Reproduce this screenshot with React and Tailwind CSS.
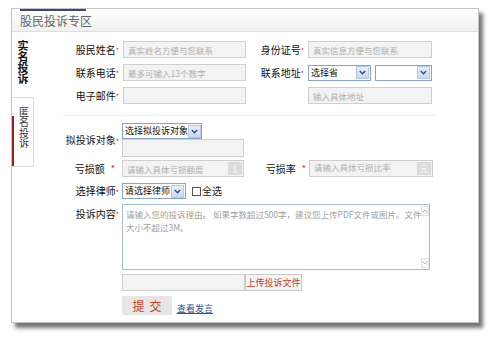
import React from 'react'

const Star = ({ mid }) => (
  <span className={`text-[#d22] ${mid ? 'text-[9px] ml-[6px]' : 'text-[7px] self-start mt-[1px]'}`}>*</span>
)

function Label({ text, w = 'w-[87px]', mid, pr = 'pr-[2px]' }) {
  return (
    <div className={`${w} ${pr} shrink-0 flex justify-end items-center text-[10px] text-[#111] leading-[12px] whitespace-nowrap`}>
      <span className="flex items-center">
        {text}
        <Star mid={mid} />
      </span>
    </div>
  )
}

function Field({ w, ph, suffix, top }) {
  return (
    <div
      className={`${w} h-[17px] shrink-0 bg-[#f3f3f3] border border-[#cfcfcf] flex ${top ? 'items-start' : 'items-center'} pl-[4px] text-[8.5px] text-[#b0b0b0] leading-[12px]`}
    >
      <span className="flex-1 whitespace-nowrap">{ph}</span>
      {suffix && (
        <span className="w-[14px] h-[13px] mr-[1px] self-center bg-[#dcdcdc] text-white text-[8px] leading-[10px] flex items-center justify-center">
          {suffix}
        </span>
      )}
    </div>
  )
}

function Arrow() {
  return (
    <span className="w-[13px] h-[13px] shrink-0 mr-[1px] bg-gradient-to-b from-[#e8eefa] to-[#c9d8f0] border border-[#b6c7e6] flex items-center justify-center">
      <svg width="7" height="5" viewBox="0 0 7 5">
        <path d="M0.8 1 L3.5 3.8 L6.2 1" fill="none" stroke="#2a4f9a" strokeWidth="1.4" />
      </svg>
    </span>
  )
}

function Select({ w, text }) {
  return (
    <div className={`${w} h-[16px] shrink-0 bg-white border border-[#8aa3c2] flex items-center pl-[2px] text-[9px] text-[#111] leading-[12px]`}>
      <span className="flex-1 whitespace-nowrap">{text}</span>
      <Arrow />
    </div>
  )
}

export default function App() {
  return (
    <div className="min-h-screen bg-white pt-[8px] pl-[11px] font-['Noto_Sans_CJK_SC','Liberation_Sans',sans-serif]">
      <div className="w-[468px] h-[315px] bg-white border border-[#c4c4c4] shadow-[4px_5px_4px_rgba(0,0,0,0.55)] flex flex-col">
        {/* header */}
        <div className="h-[23px] shrink-0 border-b border-[#e0e0e0] bg-gradient-to-b from-white to-[#f1f1f1] pl-[8px]">
          <div className="w-[66px] h-full border-t-2 border-[#3b4a6b] flex items-center text-[12px] text-[#666] leading-[14px] whitespace-nowrap">
            股民投诉专区
          </div>
        </div>

        <div className="flex flex-1">
          {/* side tabs */}
          <div className="w-[22px] shrink-0 flex flex-col">
            <div className="pt-[8px] h-[57px] flex justify-center">
              <span className="[writing-mode:vertical-rl] text-[11px] font-bold text-[#111] leading-[12px]">实名投诉</span>
            </div>
            <div className="mt-[8px] h-[70px] border border-l-0 border-[#dcdcdc] flex">
              <div className="w-[2px] h-[50px] self-end bg-[#9b1c1c]" />
              <div className="flex-1 pt-[9px] flex justify-center">
                <span className="[writing-mode:vertical-rl] text-[10px] text-[#333] leading-[12px] tracking-[0.5px]">匿名投诉</span>
              </div>
            </div>
          </div>

          {/* form */}
          <div className="flex-1 pt-[9px]">
            <div className="flex flex-col gap-[6px]">
              <div className="flex items-center">
                <Label text="股民姓名" />
                <div className="ml-[2px]"><Field w="w-[123px]" ph="真实姓名方便与您联系" /></div>
                <Label text="身份证号" w="w-[60px]" />
                <div className="ml-[2px]"><Field w="w-[124px]" ph="真实信息方便与您联系" /></div>
              </div>
              <div className="flex items-center">
                <Label text="联系电话" />
                <div className="ml-[2px]"><Field w="w-[123px]" ph="最多可输入13个数字" /></div>
                <Label text="联系地址" w="w-[60px]" />
                <div className="ml-[2px] flex gap-[4px]">
                  <Select w="w-[63px]" text="选择省" />
                  <Select w="w-[57px]" text="" />
                </div>
              </div>
              <div className="flex items-center">
                <Label text="电子邮件" />
                <div className="ml-[2px]"><Field w="w-[123px]" ph="" /></div>
                <div className="w-[60px]" />
                <div className="ml-[2px]"><Field w="w-[124px]" ph="输入具体地址" /></div>
              </div>
            </div>

            <div className="ml-[29px] mt-[11px] w-[373px] border-t border-[#ebebeb]" />

            <div className="mt-[7px] flex items-center">
              <Label text="拟投诉对象" />
              <div className="ml-[1px] flex flex-col">
                <Select w="w-[80px]" text="选择拟投诉对象" />
                <div className="w-[122px] h-[18px] bg-[#f3f3f3] border border-[#cfcfcf]" />
              </div>
            </div>

            <div className="mt-[3px] flex items-center">
              <Label text="亏损额" mid pr="pr-[6px]" />
              <div className="ml-[1px]"><Field w="w-[122px]" ph="请输入具体亏损额度" suffix="$" /></div>
              <Label text="亏损率" w="w-[65px]" mid pr="pr-[3px]" />
              <Field w="w-[124px]" ph="请输入具体亏损比率" suffix="元" top />
            </div>

            <div className="mt-[6px] flex items-center">
              <Label text="选择律师" />
              <div className="ml-[1px]"><Select w="w-[64px]" text="请选择律师" /></div>
              <span className="ml-[6px] w-[9px] h-[9px] border border-[#555] bg-white" />
              <span className="ml-[1px] text-[10px] text-[#222] leading-[12px]">全选</span>
            </div>

            <div className="mt-[5px] flex items-start">
              <div className="pt-[3px]"><Label text="投诉内容" /></div>
              <div className="ml-[1px] w-[308px] h-[66px] border border-[#a9bccf] bg-white flex">
                <div className="flex-1 pl-[3px] pt-[3px] text-[8.5px] leading-[13px] text-[#a0a0a0] whitespace-nowrap">
                  请输入您的投诉理由。 如果字数超过500字，建议您上传PDF文件或图片。文件
                  <br />
                  大小不超过3M。
                </div>
                <div className="w-[11px] flex flex-col justify-between py-[1px] pr-[1px]">
                  <span className="h-[10px] border border-[#e2e2e2] bg-[#f7f7f7] flex items-center justify-center">
                    <svg width="6" height="4" viewBox="0 0 6 4"><path d="M0.5 3.5 L3 1 L5.5 3.5" fill="none" stroke="#b8b8b8" strokeWidth="1" /></svg>
                  </span>
                  <span className="h-[10px] border border-[#e2e2e2] bg-[#f7f7f7] flex items-center justify-center">
                    <svg width="6" height="4" viewBox="0 0 6 4"><path d="M0.5 0.5 L3 3 L5.5 0.5" fill="none" stroke="#b8b8b8" strokeWidth="1" /></svg>
                  </span>
                </div>
              </div>
            </div>

            <div className="mt-[4px] flex items-center pl-[88px]">
              <div className="w-[123px] h-[17px] bg-[#f3f3f3] border border-[#cfcfcf]" />
              <div className="w-[57px] h-[17px] bg-[#f4f4f4] border border-[#c8c8c8] flex items-center justify-center text-[9px] text-[#c0391b] leading-[12px] whitespace-nowrap">
                上传投诉文件
              </div>
            </div>

            <div className="mt-[5px] flex items-end pl-[88px]">
              <div className="w-[50px] h-[19px] bg-[#e6e6e6] rounded-[2px] flex items-center justify-center text-[12px] text-[#c8401c] leading-[14px] tracking-[5px] pl-[5px]">
                提交
              </div>
              <a className="ml-[5px] mb-[1px] text-[9px] text-[#2d4f8e] underline leading-[11px]">查看发言</a>
            </div>
          </div>
        </div>
      </div>
    </div>
  )
}
